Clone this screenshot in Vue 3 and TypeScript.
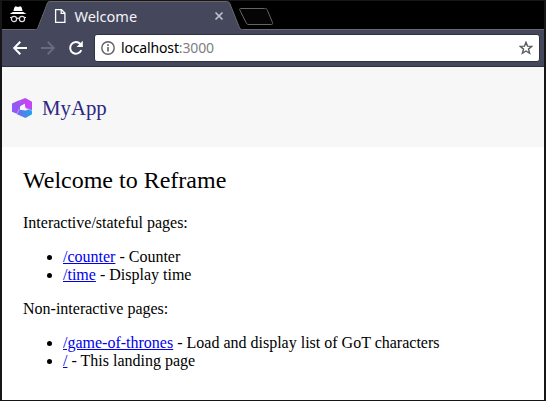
<script setup lang="ts">
interface PageLink {
  path: string
  label: string
}

interface Section {
  title: string
  links: PageLink[]
}

const sections: Section[] = [
  {
    title: 'Interactive/stateful pages:',
    links: [
      { path: '/counter', label: 'Counter' },
      { path: '/time', label: 'Display time' },
    ],
  },
  {
    title: 'Non-interactive pages:',
    links: [
      { path: '/game-of-thrones', label: 'Load and display list of GoT characters' },
      { path: '/', label: 'This landing page' },
    ],
  },
]
</script>

<template>
  <div class="window">
    <div class="tabstrip">
      <svg class="tab-shape" width="542" height="29" viewBox="0 0 542 29">
        <path d="M0 28.5H33.5C35 28.5 35.5 27.5 36 26L45 3C45.6 1.2 46.2 .5 48 .5H224.500C226.500 .5 227.300 1.200 228 3L237 25.500C238 27.800 238.500 28.500 240.500 28.500H542V30H0Z" fill="#45475c" stroke="#69676b" />
        <path d="M0 28H33C34.500 28 35 27 35.500 25.700L45 1V0H0Z" fill="#000" />
        <path d="M238.500 7.500H262.500C264 7.500 265 8 265.500 9.500L270.500 21.500C271 23 270.500 23.500 269.500 23.500H247C245.500 23.500 244.500 23 244 21.500L237.800 9C237.500 8 237.700 7.500 238.500 7.500Z" fill="#050505" stroke="#656565" />
      </svg>
      <svg class="incognito" width="18" height="19" viewBox="0 0 18 19">
        <path d="M5.400 1.200L6.600 .3L9 1L11.400 .3L12.600 1.200L13.600 5H4.400Z" fill="#fff" />
        <path d="M.7 8L3.800 6H14.200L17.300 8Z" fill="#fff" />
        <g fill="none" stroke="#dedede" stroke-width="1.200">
          <circle cx="5" cy="13" r="2.600" />
          <circle cx="13" cy="13" r="2.600" />
          <path d="M7.500 12.700Q9 11.700 10.500 12.700M1 11.500H3M15 11.500H17" />
        </g>
      </svg>
      <div class="tab">
        <svg width="12" height="15" viewBox="0 0 12 15">
          <path d="M1.600 1.600H7.500L10.900 5V14.300H1.600ZM7.200 1.600V5.300H10.900" fill="none" stroke="#fff" stroke-width="1.300" />
        </svg>
        <span class="tab-title">Welcome</span>
        <svg width="10" height="10" viewBox="0 0 10 10">
          <path d="M1.500 1.500L8.500 8.500M8.500 1.500L1.500 8.500" stroke="#c2c2c8" stroke-width="1.700" />
        </svg>
      </div>
    </div>

    <div class="toolbar">
      <svg class="nav" width="16" height="16" viewBox="0 0 16 16">
        <path d="M15 8H2.500M8.300 1.800L2.200 8L8.300 14.200" fill="none" stroke="#fff" stroke-width="2" />
      </svg>
      <svg class="nav" width="16" height="16" viewBox="0 0 16 16">
        <path d="M1 8H13.500M7.700 1.800L13.800 8L7.700 14.200" fill="none" stroke="#696a7b" stroke-width="2" />
      </svg>
      <svg class="nav" width="16" height="16" viewBox="0 0 16 16">
        <path d="M13.300 10.200A5.800 5.800 0 1 1 12.300 4" fill="none" stroke="#fff" stroke-width="2" />
        <path d="M14.800 .8V7H8.600Z" fill="#fff" />
      </svg>
      <div class="address">
        <svg width="14" height="14" viewBox="0 0 14 14">
          <circle cx="7" cy="7" r="6.200" fill="none" stroke="#606060" stroke-width="1.400" />
          <path d="M7 6V10.600M7 3.300V4.900" stroke="#606060" stroke-width="1.600" />
        </svg>
        <span class="url">localhost<span class="port">:3000</span></span>
        <svg width="14" height="14" viewBox="0 0 14 14">
          <path d="M7 1.300L8.500 5.100L12.800 5.400L9.500 8.100L10.600 12.300L7 10L3.400 12.300L4.500 8.100L1.200 5.400L5.500 5.100Z" fill="none" stroke="#5c5c5c" stroke-width="1.400" />
        </svg>
      </div>
    </div>

    <header class="site-header">
      <svg class="mark" width="20" height="20" viewBox="0 0 20 20">
        <defs>
          <linearGradient id="mark-left" x1="0" y1="0" x2="1" y2="0">
            <stop offset="0" stop-color="#8b5cf6" />
            <stop offset="1" stop-color="#b04cf0" />
          </linearGradient>
          <linearGradient id="mark-right" x1="0" y1="0" x2="1" y2="1">
            <stop offset="0" stop-color="#a94ff0" />
            <stop offset="1" stop-color="#d83cfa" />
          </linearGradient>
          <linearGradient id="mark-bottom" x1="0" y1="0" x2="1" y2="0">
            <stop offset="0" stop-color="#7a66f2" />
            <stop offset="1" stop-color="#1ba5e6" />
          </linearGradient>
        </defs>
        <path d="M0 5.400L6.500 2.500L13 5.600L8 8.500V13L5.500 16L0 13.700Z" fill="url(#mark-left)" />
        <path d="M6.500 2.700L13.300 0L20 3.800V13L13 10V6L12 5.500Z" fill="url(#mark-right)" />
        <path d="M6.300 11.500L13.500 12.500L20 10.500V16.300L13.500 20L5 16.300Z" fill="url(#mark-bottom)" />
        <path d="M7.500 11.200L9 8L12.700 6.200L13.800 11.500L10.800 10.200Z" fill="#f7f7f7" />
        <path d="M13.500 9.800L20 12.900M7 11.300L5 15.800" stroke="#d8cdfa" stroke-width=".6" />
      </svg>
      <span class="brand">MyApp</span>
    </header>

    <main class="content">
      <h2>Welcome to Reframe</h2>
      <template v-for="section in sections" :key="section.title">
        <p>{{ section.title }}</p>
        <ul>
          <li v-for="link in section.links" :key="link.path">
            <a :href="link.path">{{ link.path }}</a> - {{ link.label }}
          </li>
        </ul>
      </template>
    </main>
  </div>
</template>

<style scoped>
.window {
  box-sizing: border-box;
  width: 546px;
  height: 401px;
  overflow: hidden;
  border: solid #161617;
  border-width: 1px 2px;
  background: #fff;
  font-family: "Liberation Serif", serif;
  font-size: 16px;
  line-height: 18px;
  color: #000;
}

svg {
  display: block;
  flex: none;
}

.tabstrip {
  position: relative;
  display: flex;
  align-items: center;
  height: 29px;
  background: #000;
}

.tab-shape {
  position: absolute;
  left: 0;
  top: 0;
}

.incognito {
  position: relative;
  margin-left: 7px;
}

.tab {
  position: relative;
  display: flex;
  align-items: center;
  width: 170px;
  margin-left: 27px;
  color: #f4f4f6;
  font: 14.5px/20px "Noto Sans", sans-serif;
}

.tab-title {
  flex: 1;
  margin-left: 8.5px;
}

.toolbar {
  box-sizing: border-box;
  display: flex;
  align-items: center;
  gap: 12px;
  height: 37px;
  padding: 0 4px 1px 10px;
  background: #45475c;
  border-bottom: 1px solid #30313f;
}

.address {
  box-sizing: border-box;
  display: flex;
  flex: 1;
  align-items: center;
  height: 28px;
  margin-left: -2px;
  padding: 0 6px;
  border: 1px solid #313342;
  border-radius: 3px;
  background: #fff;
  font: 14px/20px "Noto Sans", sans-serif;
  letter-spacing: -0.15px;
}

.url {
  flex: 1;
  margin-left: 6px;
}

.port {
  color: #808080;
}

.site-header {
  display: flex;
  align-items: center;
  height: 80px;
  padding-left: 10px;
  background: #f7f7f7;
}

.mark {
  margin-top: 2px;
}

.brand {
  margin-left: 10px;
  padding-top: 2px;
  font-size: 20.8px;
  line-height: 24px;
  color: #2c2884;
}

.content {
  padding: 20px 21px 0;
}

h2 {
  margin: 0 0 20px;
  font-size: 24px;
  font-weight: 400;
  line-height: 27px;
}

p {
  margin: 0 0 16px;
}

ul {
  margin: 0 0 16px;
  padding-left: 40px;
}

a {
  color: #0000ee;
  text-decoration: underline;
}
</style>

<style>
body {
  margin: 0;
}
</style>
